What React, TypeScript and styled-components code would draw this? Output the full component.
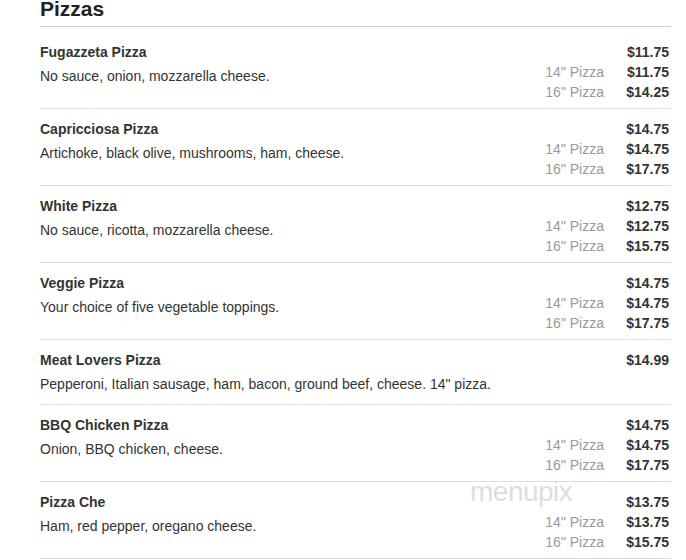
import { createGlobalStyle, styled } from "styled-components";

const GlobalStyle = createGlobalStyle`
  html, body {
    margin: 0;
    padding: 0;
    background: #fff;
    overflow: hidden;
  }
  body {
    font-family: "Liberation Sans", Arial, sans-serif;
    color: #333;
  }
`;

const Page = styled.div`
  position: relative;
  width: 686px;
  height: 560px;
  overflow: hidden;
  padding: 0 15px 0 40px;
  box-sizing: border-box;
`;

const Title = styled.h2`
  margin: -2px 0 5px;
  padding-bottom: 7px;
  font-size: 21px;
  line-height: 21px;
  font-weight: bold;
  color: #222;
  border-bottom: 1px solid #ccc;
`;

const Item = styled.div`
  display: flex;
  justify-content: space-between;
  align-items: flex-start;
  padding: 10px 0 6px;
  border-bottom: 1px solid #ddd;
`;

const Info = styled.div`
  flex: 1;
`;

const Name = styled.div`
  font-size: 14px;
  line-height: 20px;
  font-weight: bold;
  color: #333;
`;

const Desc = styled.div`
  margin: 4px 0;
  font-size: 14px;
  line-height: 20px;
  color: #333;
`;

const Prices = styled.div`
  display: grid;
  grid-template-columns: auto 65px;
  padding-right: 2px;
`;

const Label = styled.span`
  font-size: 14px;
  line-height: 20px;
  color: #999;
  text-align: right;
`;

const Price = styled.span`
  font-size: 14px;
  line-height: 20px;
  font-weight: bold;
  color: #333;
  text-align: right;
`;

const Watermark = styled.div`
  position: absolute;
  left: 470px;
  top: 478px;
  font-size: 28px;
  line-height: 28px;
  letter-spacing: -0.5px;
  color: #dedede;
  pointer-events: none;
`;

interface Pizza {
  name: string;
  desc: string;
  base: string;
  sizes?: [string, string][];
}

const pizzas: Pizza[] = [
  { name: "Fugazzeta Pizza", desc: "No sauce, onion, mozzarella cheese.", base: "$11.75", sizes: [["14\" Pizza", "$11.75"], ["16\" Pizza", "$14.25"]] },
  { name: "Capricciosa Pizza", desc: "Artichoke, black olive, mushrooms, ham, cheese.", base: "$14.75", sizes: [["14\" Pizza", "$14.75"], ["16\" Pizza", "$17.75"]] },
  { name: "White Pizza", desc: "No sauce, ricotta, mozzarella cheese.", base: "$12.75", sizes: [["14\" Pizza", "$12.75"], ["16\" Pizza", "$15.75"]] },
  { name: "Veggie Pizza", desc: "Your choice of five vegetable toppings.", base: "$14.75", sizes: [["14\" Pizza", "$14.75"], ["16\" Pizza", "$17.75"]] },
  { name: "Meat Lovers Pizza", desc: "Pepperoni, Italian sausage, ham, bacon, ground beef, cheese. 14\" pizza.", base: "$14.99" },
  { name: "BBQ Chicken Pizza", desc: "Onion, BBQ chicken, cheese.", base: "$14.75", sizes: [["14\" Pizza", "$14.75"], ["16\" Pizza", "$17.75"]] },
  { name: "Pizza Che", desc: "Ham, red pepper, oregano cheese.", base: "$13.75", sizes: [["14\" Pizza", "$13.75"], ["16\" Pizza", "$15.75"]] },
];

function App() {
  return (
    <>
      <GlobalStyle />
      <Page>
        <Title>Pizzas</Title>
        {pizzas.map((p) => (
          <Item key={p.name}>
            <Info>
              <Name>{p.name}</Name>
              <Desc>{p.desc}</Desc>
            </Info>
            <Prices>
              <Label />
              <Price>{p.base}</Price>
              {p.sizes?.map(([label, price]) => (
                <>
                  <Label key={label}>{label}</Label>
                  <Price key={label + price}>{price}</Price>
                </>
              ))}
            </Prices>
          </Item>
        ))}
        <Watermark>menupix</Watermark>
      </Page>
    </>
  );
}

export default App;
